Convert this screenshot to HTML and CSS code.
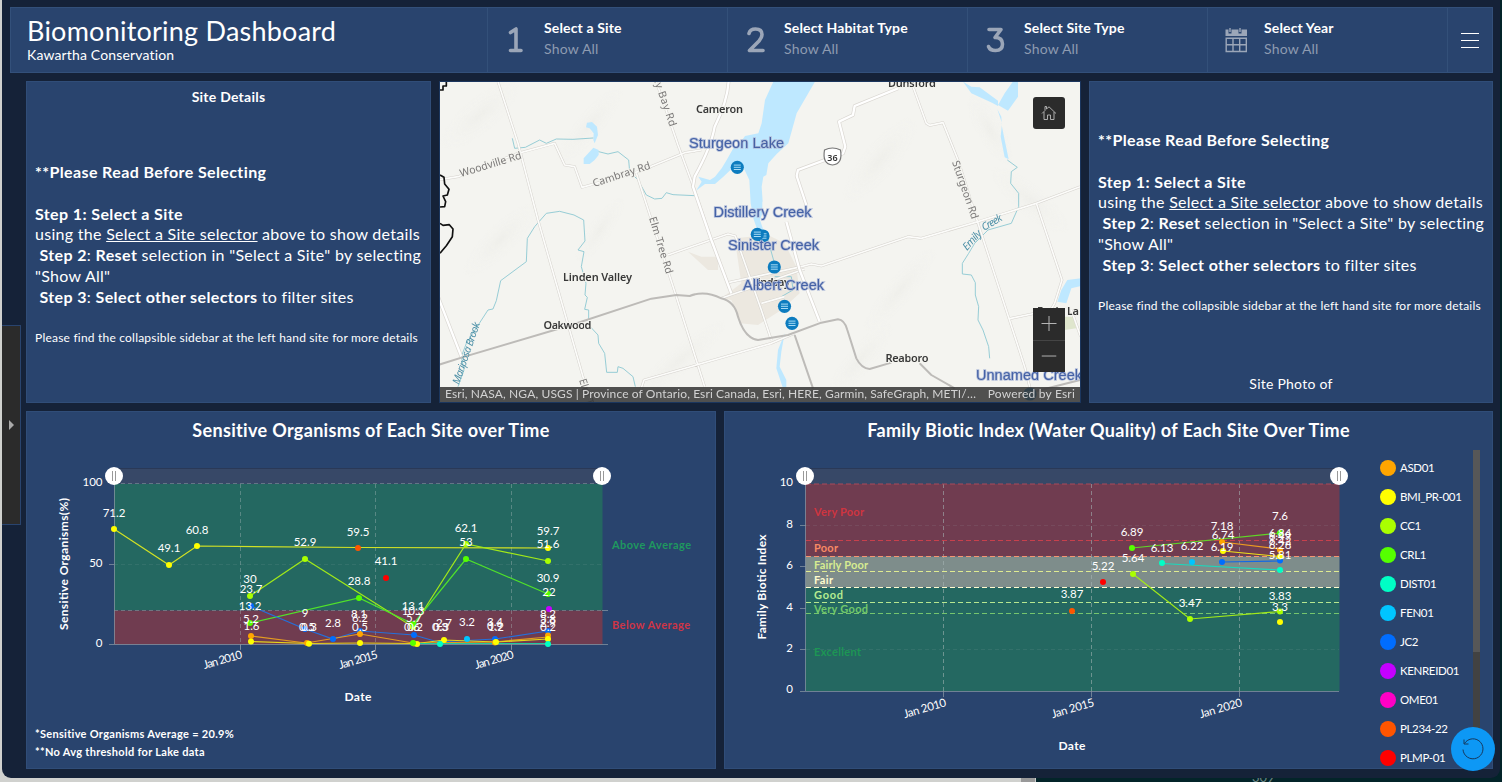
FILE: index.html
```html
<!DOCTYPE html>
<html lang="en">
<head>
<meta charset="utf-8">
<title>Biomonitoring Dashboard</title>
<link rel="stylesheet" href="styles.css">
</head>
<body>
<div class="window">
  <header class="header">
    <div class="brand">
      <h1>Biomonitoring Dashboard</h1>
      <p>Kawartha Conservation</p>
    </div>
    <div class="selector">
      <svg class="num" viewBox="0 0 28 30"><path d="M8.500 7.500 14 4V25M8.500 25.500H19"/></svg>
      <div><b>Select a Site</b><span>Show All</span></div>
    </div>
    <div class="selector">
      <svg class="num" viewBox="0 0 28 30"><path d="M7 8.500Q8 4 13.500 4Q20 4 20 9.500Q20 12.500 17 16L7.500 25.500H21"/></svg>
      <div><b>Select Habitat Type</b><span>Show All</span></div>
    </div>
    <div class="selector">
      <svg class="num" viewBox="0 0 28 30"><path d="M7 4.500H19L13 12.500Q20.500 12.500 20.500 19Q20.500 25.500 13.500 25.500Q8 25.500 6.500 21.500"/></svg>
      <div><b>Select Site Type</b><span>Show All</span></div>
    </div>
    <div class="selector">
      <svg class="cal" viewBox="0 0 28 30"><path class="fill" d="M3.500 4.500H6.500V8.500H9.500V4.500H16.500V8.500H19.500V4.500H22.500H25V11H3.500Z"/><path d="M8 3V7M18 3V7M4.200 13.200H24.300V26.500H4.200ZM11 13.200V26.500M17.700 13.200V26.500M4.200 19.800H24.300"/></svg>
      <div><b>Select Year</b><span>Show All</span></div>
    </div>
    <div class="menu"><i></i><i></i><i></i></div>
  </header>

  <div class="row top">
    <section class="panel details">
      <h2>Site Details</h2>
      <div class="steps">
        <p><b>**Please Read Before Selecting</b></p>
        <p>&nbsp;</p>
        <p><b>Step 1: Select a Site</b></p>
        <p>using the <u>Select a Site selector</u> above to show details</p>
        <p>&nbsp;<b>Step 2</b>: <b>Reset</b> selection in "Select a Site" by selecting<br>"Show All"</p>
        <p>&nbsp;<b>Step 3</b>: <b>Select other selectors</b> to filter sites</p>
        <p>&nbsp;</p>
        <p class="small">Please find the collapsible sidebar at the left hand site for more details</p>
      </div>
    </section>

    <section class="panel map">
      <svg class="canvas" viewBox="440 82 641 321">
        <defs>
          <radialGradient id="hill"><stop offset="0" stop-color="#ebebe6"/><stop offset="1" stop-color="#f4f4f0" stop-opacity="0"/></radialGradient>
          <g id="pin"><circle r="6.600" fill="#0d7cbf"/><path d="M-3.500-2.200H3.500M-3.500 0H3.500M-3.500 2.200H3.500" stroke="#a9dcf5" stroke-width="1"/></g>
        </defs>
        <rect x="440" y="82" width="641" height="321" fill="#f4f4f0"/>
        <g fill="url(#hill)" opacity=".55">
          <ellipse cx="480" cy="115" rx="50" ry="18" transform="rotate(-40 480 115)"/><ellipse cx="590" cy="125" rx="50" ry="14" transform="rotate(-50 590 125)"/>
          <ellipse cx="500" cy="240" rx="50" ry="16" transform="rotate(-45 500 240)"/><ellipse cx="600" cy="230" rx="40" ry="12" transform="rotate(-55 600 230)"/>
          <ellipse cx="880" cy="160" rx="55" ry="18" transform="rotate(-50 880 160)"/><ellipse cx="900" cy="290" rx="55" ry="14" transform="rotate(-50 900 290)"/>
          <ellipse cx="1030" cy="200" rx="50" ry="16" transform="rotate(40 1030 200)"/><ellipse cx="990" cy="130" rx="40" ry="14" transform="rotate(60 990 130)"/>
          <ellipse cx="680" cy="360" rx="60" ry="14" transform="rotate(-40 680 360)"/><ellipse cx="860" cy="360" rx="50" ry="14" transform="rotate(-50 860 360)"/>
        </g>
        <g transform="translate(438 80) scale(.33333)" fill="none" stroke-linejoin="round">
          <path fill="#ece8e0" d="M750 515 790 530 840 530V570H810ZM890 475 990 465 1040 490 1075 560 1085 640 1030 690 960 735 905 730 880 660 850 655 910 610Z"/>
          <g fill="#bee8ff">
            <path d="M1006 5 981 60 971 130 961 160 921 168 906 190 886 205 866 240 851 265 831 290 816 300 781 290 791 305 774 332 801 312 831 312 856 290 886 262 916 262 934 300 938 370 946 415 958 450H976L966 420 973 400V365H974L971 320 976 290 985 285 991 250 1016 222 1051 190 1076 100 1131 5Z"/>
            <path d="M447 128 462 126 477 140 480 165 470 190 466 180 467 160 455 145 444 142ZM466 203 482 210 482 225 470 240 455 252 437 252 437 235Z"/>
            <path d="M1575 5 1600 20 1625 22 1680 62 1680 78 1662 68 1600 40ZM1678 88 1690 110 1692 140 1700 180 1712 238 1700 232 1688 170 1692 130ZM1700 40 1728 0H1740V50L1710 92 1680 75Z"/>
            <path d="M1858 665 1870 630 1888 600 1930 595V618L1900 625 1885 670Z"/>
            <path d="M1040 760 1020 810 1015 865 1035 925 1045 922 1045 900 1025 860 1030 815Z"/>
          </g>
          <path fill="#dfe6cd" d="M1880 710H1905L1915 745 1880 750Z"/>
          <g stroke="#8fc9d3" stroke-width="2.800">
            <path d="M223 175 230 205 262 202 305 180 325 190 355 177 405 178 466 174M482 215 510 222 540 215 572 240 575 275 600 300 625 345 650 357 672 355 685 338 705 344 770 347M990 480 1008 545"/>
            <path d="M60 920 78 870 70 830 85 790 150 690 165 687 175 662 188 602 265 545 268 475 290 440 325 400 365 394 408 405 437 420 441 483 420 510 438 515 430 560 444 610 441 645 448 652 440 688 452 690 452 735 480 765 482 790 500 820 506 877 538 877 540 860 555 865 585 890 592 920"/>
            <path d="M1708 240 1738 262 1720 275 1718 310 1742 340 1742 380 1720 430 1650 450 1610 490 1592 520 1573 550 1573 582 1600 585 1612 608 1612 645 1622 680 1620 720 1635 750 1652 800 1655 835M1030 650 1065 630 1060 590 1010 590"/>
          </g>
          <g stroke="#d5d2cd" stroke-width="8">
            <path d="M180 5 240 190 300 420 435 890 455 960M0 300 60 290 240 220 350 190 380 255 410 260 432 322 600 275 740 218 790 210M655 5 720 195 768 325 820 480 880 640M595 280 715 650 800 920M690 525 870 462 892 468 970 690 1000 780M605 940 618 900 1000 790 1070 760M850 655 1100 567"/>
            <path d="M1425 20 1465 130 1475 136 1515 128 1560 240 1620 430 1760 860 1780 940M870 608 1090 560 1120 552 1150 558 1410 470 1450 475 1620 425 1795 370 1926 320M1795 370 1872 600 1850 670 1838 690 1715 716M1900 690 1928 770M970 670 1040 650"/>
          </g>
          <g stroke="#fcfcfa" stroke-width="5">
            <path d="M180 5 240 190 300 420 435 890 455 960M0 300 60 290 240 220 350 190 380 255 410 260 432 322 600 275 740 218 790 210M655 5 720 195 768 325 820 480 880 640M595 280 715 650 800 920M690 525 870 462 892 468 970 690 1000 780M605 940 618 900 1000 790 1070 760M850 655 1100 567"/>
            <path d="M1425 20 1465 130 1475 136 1515 128 1560 240 1620 430 1760 860 1780 940M870 608 1090 560 1120 552 1150 558 1410 470 1450 475 1620 425 1795 370 1926 320M1795 370 1872 600 1850 670 1838 690 1715 716M1900 690 1928 770M970 670 1040 650"/>
          </g>
          <g stroke="#dad7d2" stroke-width="11"><path d="M872 0Q870 60 830 140 820 200 770 290L765 320 820 480 880 640M1380 25 1250 78 1245 105 1203 125 1222 200 1215 220 1080 270 1076 288 1105 375M1045 425 1085 570 1145 725M0 650 70 830"/></g>
          <g stroke="#fff" stroke-width="7"><path d="M872 0Q870 60 830 140 820 200 770 290L765 320 820 480 880 640M1380 25 1250 78 1245 105 1203 125 1222 200 1215 220 1080 270 1076 288 1105 375M1045 425 1085 570 1145 725M0 650 70 830"/></g>
          <path stroke="#bdbbb8" stroke-width="6" d="M0 855 80 830 400 735 640 656 715 645 755 648 Q800 630 850 655 Q890 665 900 710 Q920 775 960 780 L1050 765 1150 728 1200 718Q1220 720 1228 750L1255 835Q1270 865 1295 867L1360 848M1070 765 1125 925M1445 850 1480 885 1550 925M1770 940 1926 900"/>
          <path stroke="#111" stroke-width="5" d="M6 30H15V18H25V5M6 285 18 292 20 312 33 328 28 345 15 348 23 365 20 380 6 381M6 430 15 436 34 434 45 447 43 470 25 497 6 520"/>
        </g>
        <g class="place">
          <text x="696" y="113" textLength="47">Cameron</text><text x="563" y="280.500" textLength="69">Linden Valley</text><text x="543.500" y="329" textLength="48">Oakwood</text><text x="885.500" y="361.500" textLength="43">Reaboro</text><text x="888" y="87" textLength="48">Dunsford</text><text x="752" y="286" textLength="38">Lindsay</text><text x="1037" y="315" textLength="42">Eagle La</text>
        </g>
        <g class="road">
          <text transform="translate(461 177) rotate(-17)" textLength="64">Woodville Rd</text><text transform="translate(594 187) rotate(-18)" textLength="60">Cambray Rd</text>
          <text transform="translate(649 218) rotate(73)" textLength="59">Elm Tree Rd</text><text transform="translate(653 78) rotate(71)" textLength="52">ey Bay Rd</text><text transform="translate(952 162) rotate(71)" textLength="61">Sturgeon Rd</text><text transform="translate(579 380) rotate(72)">Elm Tree Rd</text>
        </g>
        <g class="water"><text transform="translate(459 385) rotate(-71)" textLength="65">Mariposa Brook</text><text transform="translate(967 251) rotate(-48)" textLength="23">Emily</text><text transform="translate(984 231) rotate(-30)" textLength="22">Creek</text></g>
        <path d="M824.500 150Q832.500 146 840.500 150 843 164 832.500 165 822 164 824.500 150Z" fill="#fff" stroke="#777" stroke-width="1.200"/>
        <text x="832.500" y="161" text-anchor="middle" class="shield">36</text>
        <use href="#pin" x="763" y="236"/><use href="#pin" x="737.300" y="167.300"/><use href="#pin" x="757.300" y="234.300"/><use href="#pin" x="774.300" y="267"/><use href="#pin" x="784.500" y="306.300"/><use href="#pin" x="792" y="323.300"/><use href="#pin" x="1030" y="394"/>
        <g class="site">
          <text x="689" y="147.700" textLength="95">Sturgeon Lake</text><text x="713.500" y="216.700" textLength="98">Distillery Creek</text><text x="728" y="249.700" textLength="91">Sinister Creek</text><text x="743" y="289.700" textLength="81">Albert Creek</text><text x="976" y="379.700" textLength="106">Unnamed Creek</text>
        </g>
      </svg>
      <div class="home"><svg viewBox="0 0 16 16"><path d="M1 8.500 4 5.500V1.500H5.500V4M5.500 4 8 1.800 15 8.500M3 7V14.500H6.500V10H9.500V14.500H13V7"/></svg></div>
      <div class="zoomer"><svg viewBox="0 0 32 32"><path d="M8.500 15.500H23.500M16 8V23"/></svg><svg viewBox="0 0 32 32"><path d="M8.500 15.500H23.500"/></svg></div>
      <div class="credit"><span>Esri, NASA, NGA, USGS | Province of Ontario, Esri Canada, Esri, HERE, Garmin, SafeGraph, METI/…</span><span class="powered">Powered by Esri</span></div>
    </section>

    <section class="panel photo">
      <div class="steps">
        <p><b>**Please Read Before Selecting</b></p>
        <p>&nbsp;</p>
        <p><b>Step 1: Select a Site</b></p>
        <p>using the <u>Select a Site selector</u> above to show details</p>
        <p>&nbsp;<b>Step 2</b>: <b>Reset</b> selection in "Select a Site" by selecting<br>"Show All"</p>
        <p>&nbsp;<b>Step 3</b>: <b>Select other selectors</b> to filter sites</p>
        <p>&nbsp;</p>
        <p class="small">Please find the collapsible sidebar at the left hand site for more details</p>
      </div>
      <p class="caption">Site Photo of</p>
    </section>
  </div>

  <div class="row bottom">
    <section class="panel organisms">
      <h3>Sensitive Organisms of Each Site over Time</h3>
      <svg class="chart" viewBox="27 450 688 274">
        <rect x="114" y="469" width="488" height="15" fill="#374867"/><path d="M114 468.500H602" stroke="#2a3957"/>
        <rect x="114" y="484" width="488.500" height="126.500" fill="#246861"/><rect x="114" y="610.500" width="488.500" height="34" fill="#703c50"/>
        <g class="grid"><path d="M240.500 484V650M375.500 484V650M511.500 484V650M114 483.500H602M114 610.500H602"/><path opacity=".3" d="M114 564.500H602"/></g>
        <path class="axis" d="M114.500 484V644M109 564.500H114M109 644.500H608M602 610.500H608M240.500 644V650M375.500 644V650M511.500 644V650"/>
        <g class="line">
          <path stroke="#d2e224" d="M114 529 169 565 197 546 358 547.500 548 548"/>
          <path stroke="#a2ea18" d="M250 596 305 559 413 627 466 544 548 561"/>
          <path stroke="#50e22a" d="M250 623 359 598 413.300 624 466 559 548 594"/>
          <path stroke="#2470dc" d="M251 606 305 629 333 639 360 631 414 635 438 642 495 639 548 631"/>
          <path stroke="#e49b20" d="M251 636 306 643 360 634 413 643 494 642 548 637"/>
          <path stroke="#e5d51b" d="M251 641.500 309 643.500 360 643 417 643.500 444 640 496 642 548 639"/>
          <path stroke="#20caa0" d="M413 643.500 440 643.500 548 643.500"/>
        </g>
        <g class="dots">
          <g fill="#006dff"><circle cx="251" cy="606" r="3"/><circle cx="305" cy="629" r="3"/><circle cx="333" cy="639" r="3"/><circle cx="360" cy="631" r="3"/><circle cx="414" cy="635" r="3"/><circle cx="495" cy="639" r="3"/><circle cx="548" cy="631" r="3"/></g>
          <g fill="#ffa500"><circle cx="251" cy="636" r="3"/><circle cx="307" cy="643" r="3"/><circle cx="360" cy="634" r="3"/><circle cx="414" cy="643.500" r="3"/><circle cx="495" cy="642.500" r="3"/><circle cx="548" cy="635.500" r="3"/></g>
          <g fill="#ff0"><circle cx="114" cy="529" r="3"/><circle cx="169" cy="565" r="3"/><circle cx="197" cy="546" r="3"/><circle cx="548" cy="548" r="3"/><circle cx="251" cy="641.500" r="3"/><circle cx="309" cy="643.800" r="3"/><circle cx="360" cy="643" r="3"/><circle cx="417" cy="644" r="3"/><circle cx="444" cy="640" r="3"/><circle cx="496" cy="642" r="3"/><circle cx="548" cy="639" r="3"/></g>
          <g fill="#af0"><circle cx="250" cy="596" r="3"/><circle cx="305" cy="559" r="3"/><circle cx="413" cy="627" r="3"/><circle cx="466" cy="544" r="3"/><circle cx="548" cy="561" r="3"/></g>
          <g fill="#5f0"><circle cx="250" cy="623" r="3"/><circle cx="359" cy="598" r="3"/><circle cx="413.300" cy="624" r="3"/><circle cx="466" cy="559" r="3"/><circle cx="548" cy="594" r="3"/><circle cx="413" cy="643" r="3"/></g>
          <circle cx="440" cy="644" r="3" fill="#00ffc5"/><circle cx="548" cy="644" r="3" fill="#00ffc5"/><circle cx="467" cy="639" r="3" fill="#00c5ff"/><circle cx="549" cy="609" r="3" fill="#c500ff"/><circle cx="386" cy="578" r="3" fill="#f00"/><circle cx="358" cy="548" r="3" fill="#f50"/>
        </g>
        <g class="label">
          <text x="114" y="517">71.2</text><text x="169" y="552">49.1</text><text x="197" y="534">60.8</text><text x="305" y="546">52.9</text><text x="358" y="536">59.5</text><text x="466" y="532">62.1</text><text x="466" y="546">53</text><text x="548" y="535">59.7</text><text x="548" y="548">51.6</text>
          <text x="250" y="583">30</text><text x="251" y="593">23.7</text><text x="250" y="610">13.2</text><text x="251" y="623">5.2</text><text x="251.500" y="629.500">1.6</text><text x="305" y="617">9</text><text x="307" y="631">0.5</text><text x="309" y="631">0.3</text><text x="333" y="627">2.8</text>
          <text x="359" y="585">28.8</text><text x="359" y="618">8.1</text><text x="360" y="622">6.2</text><text x="360" y="631">0.5</text><text x="386" y="565">41.1</text><text x="413" y="610">13.1</text><text x="413" y="615">10.3</text><text x="414" y="622">5.7</text><text x="412" y="631">0.6</text><text x="415" y="631">0.2</text>
          <text x="440" y="631">0.3</text><text x="441" y="631">0.3</text><text x="444" y="627">2.7</text><text x="467" y="626">3.2</text><text x="495" y="626">3.4</text><text x="495" y="630">0.9</text><text x="496" y="630.500">1.2</text><text x="548" y="582">30.9</text><text x="549" y="596">22</text><text x="548" y="618">8.2</text><text x="548" y="623">5.8</text><text x="548" y="627">2.9</text><text x="548" y="631">0.2</text>
        </g>
        <g class="label end"><text x="102.500" y="485.500">100</text><text x="102.500" y="566.500">50</text><text x="102.500" y="646.500">0</text>
          <text transform="translate(243 658) rotate(-16)" textLength="40">Jan 2010</text><text transform="translate(378.500 658) rotate(-16)" textLength="40">Jan 2015</text><text transform="translate(514.500 658) rotate(-16)" textLength="40">Jan 2020</text></g>
        <text class="title" x="358" y="701" textLength="27">Date</text><text class="title" transform="translate(68 564) rotate(-90)" textLength="132">Sensitive Organisms(%)</text>
        <text class="note" x="612" y="549" fill="#1f985f" textLength="79">Above Average</text><text class="note" x="612" y="629" fill="#cf3546" textLength="78">Below Average</text>
        <g class="handle"><circle cx="114" cy="476" r="9"/><circle cx="602" cy="476" r="9"/><path d="M112.500 471V481M115.500 471V481M600.500 471V481M603.500 471V481"/></g>
      </svg>
      <div class="foot"><p>*Sensitive Organisms Average = 20.9%</p><p>**No Avg threshold for Lake data</p></div>
    </section>

    <section class="panel biotic">
      <h3>Family Biotic Index (Water Quality) of Each Site Over Time</h3>
      <div class="split">
        <svg class="chart" viewBox="725 450 655 318">
          <rect x="806" y="469" width="534" height="15" fill="#374867"/><path d="M806 468.500H1340" stroke="#2a3957"/>
          <rect x="805.500" y="484" width="534" height="72.500" fill="#703c50"/><rect x="805.500" y="556.500" width="534" height="31" fill="#7e8d8b"/><rect x="805.500" y="587.500" width="534" height="103.500" fill="#246861"/>
          <g class="grid strong"><path d="M943.500 484V691M1091.500 484V691M1239.500 484V691"/><path opacity=".22" d="M806 525.500H1339M806 649.500H1339"/></g>
          <g class="band"><path stroke="#a94a5b" d="M806 484H1339"/><path stroke="#c8404c" d="M806 540.500H1339"/><path stroke="#f49572" d="M806 556.500H1339"/><path stroke="#dfeb91" d="M806 571.500H1339"/><path stroke="#fffccf" d="M806 587.500H1339"/><path stroke="#b7e790" d="M806 602.500H1339"/><path stroke="#75c56e" d="M806 613.500H1339"/></g>
          <path class="axis" d="M805.500 484V691M800 525.500H806M800 566.500H806M800 608.500H806M800 649.500H806M800 691.500H1339M943.500 691V697M1091.500 691V697M1239.500 691V697"/>
          <g class="zone"><text x="814" y="516" fill="#cf3540" textLength="50">Very Poor</text><text x="814" y="552" fill="#f88a65" textLength="24">Poor</text><text x="814" y="568.500" fill="#d7ec91" textLength="54">Fairly Poor</text><text x="814" y="583.500" fill="#fffccf" textLength="19">Fair</text><text x="814" y="599" fill="#b6eb90" textLength="29">Good</text><text x="814" y="612.500" fill="#72c86a" textLength="54">Very Good</text><text x="814" y="656" fill="#1d9654" textLength="47">Excellent</text></g>
          <g class="line"><path stroke="#a2ea18" d="M1133 574 1190 619 1280 611.500"/><path stroke="#60d627" d="M1132 548 1280 533"/><path stroke="#1cd8bc" d="M1162 563.500 1280 570"/><path stroke="#ed9b20" d="M1222 542 1280 549"/><path stroke="#f0e419" d="M1223 551 1280 556.500"/><path stroke="#1268e5" d="M1222 562 1280 561"/></g>
          <g class="dots"><circle cx="1072" cy="611" r="3" fill="#f50"/><circle cx="1103" cy="582" r="3" fill="#f00"/><circle cx="1192" cy="562" r="3" fill="#00c5ff"/>
            <g fill="#ffa500"><circle cx="1222" cy="542" r="3"/><circle cx="1280" cy="550" r="3"/></g><g fill="#006dff"><circle cx="1222" cy="562" r="3"/><circle cx="1280" cy="560.500" r="3"/></g><g fill="#00ffc5"><circle cx="1162" cy="563" r="3"/><circle cx="1280" cy="570" r="3"/></g><g fill="#ff0"><circle cx="1223" cy="551" r="3"/><circle cx="1280" cy="556.500" r="3"/><circle cx="1280" cy="622" r="3"/></g><g fill="#af0"><circle cx="1133" cy="574" r="3"/><circle cx="1190" cy="619" r="3"/><circle cx="1280" cy="611.500" r="3"/></g><g fill="#5f0"><circle cx="1132" cy="548" r="3"/><circle cx="1280" cy="533" r="3"/></g></g>
          <g class="label"><text x="1072" y="598">3.87</text><text x="1103" y="570">5.22</text><text x="1132" y="535.500">6.89</text><text x="1133" y="561.500">5.64</text><text x="1162" y="552">6.13</text><text x="1192" y="549.500">6.22</text><text x="1222" y="529.500">7.18</text><text x="1223" y="538.500">6.74</text><text x="1222" y="551">6.19</text><text x="1280" y="520">7.6</text><text x="1280" y="536.500">6.84</text><text x="1280" y="540">6.49</text><text x="1280" y="545">6.42</text><text x="1280" y="548.500">6.28</text><text x="1280" y="558.500">5.81</text><text x="1190" y="606.500">3.47</text><text x="1280" y="599.500">3.83</text><text x="1280" y="610.500">3.3</text></g>
          <g class="label end"><text x="793" y="485.500">10</text><text x="793" y="527.500">8</text><text x="793" y="569">6</text><text x="793" y="611">4</text><text x="793" y="652">2</text><text x="793" y="693">0</text><text transform="translate(947 706) rotate(-16)" textLength="44">Jan 2010</text><text transform="translate(1095 706) rotate(-16)" textLength="44">Jan 2015</text><text transform="translate(1243 706) rotate(-16)" textLength="44">Jan 2020</text></g>
          <text class="title" x="1072" y="750" textLength="27">Date</text><text class="title" transform="translate(766 587) rotate(-90)" textLength="105">Family Biotic Index</text>
          <g class="handle"><circle cx="805" cy="476" r="9"/><circle cx="1339" cy="476" r="9"/><path d="M803.500 471V481M806.500 471V481M1337.500 471V481M1340.500 471V481"/></g>
        </svg>
        <ul class="legend">
          <li class="c1">ASD01</li><li class="c2">BMI_PR-001</li><li class="c3">CC1</li><li class="c4">CRL1</li><li class="c5">DIST01</li><li class="c6">FEN01</li><li class="c7">JC2</li><li class="c8">KENREID01</li><li class="c9">OME01</li><li class="c10">PL234-22</li><li class="c11">PLMP-01</li>
        </ul>
        <div class="scroll"><i></i></div>
      </div>
    </section>
  </div>

  <div class="drawer"><i></i></div>
  <div class="reset"><svg viewBox="0 0 24 24"><path d="M3 2.500V7H7.500M3.500 6.500A10 10 0 1 1 2 12.500"/></svg></div>
</div>
<div class="behind"><span>309</span></div>
</body>
</html>
```
FILE: styles.css
```css
* { box-sizing: border-box; margin: 0; padding: 0; }
body {
  width: 1502px; height: 782px; overflow: hidden; position: relative;
  font-family: Lato, "Open Sans", sans-serif; color: #fff;
  background: linear-gradient(90deg, #d0d1ce 0 1021px, #999 1021px 1035px, #ccc 1035px 1036px, #032429 1036px);
}
.window {
  position: relative; z-index: 1; width: 1498px; height: 778px; margin-left: 2px;
  padding: 7px 7px 0 8px; background: #152238; border-radius: 0 0 9px 9px;
}
.behind { position: absolute; right: 0; bottom: 0; left: 1036px; height: 5px; overflow: hidden; }
.behind span { display: block; margin: -6px 0 0 216px; font-size: 13px; line-height: 12px; color: #6b8584; }
.header { display: flex; height: 66px; background: #29446e; border: 1px solid #33507a; }
.brand { width: 476px; padding: 6px 16px; }
h1 { font-size: 27px; line-height: 34px; font-weight: 400; letter-spacing: .23px; white-space: nowrap; }
.brand p { font-size: 14px; line-height: 16px; letter-spacing: .15px; margin-top: -1px; }
.selector { width: 240px; display: flex; align-items: center; padding-left: 14px; border-left: 1px solid #335079; }
.selector > svg { width: 28px; height: 30px; margin-right: 14px; }
.num { fill: none; stroke: #9ba6b8; stroke-width: 3.600; stroke-linecap: round; stroke-linejoin: round; }
.cal { fill: none; stroke: #9ba6b8; stroke-width: 1.400; }
.cal .fill { fill: #9ba6b8; stroke: none; }
.selector div { padding-bottom: 4px; }
.selector b { display: block; font-size: 14px; line-height: 20px; font-weight: 700; letter-spacing: .14px; }
.selector span { display: block; font-size: 14px; line-height: 21px; color: #8e9bb1; letter-spacing: .2px; }
.menu { flex: 1; border-left: 1px solid #335079; display: flex; flex-direction: column; align-items: center; justify-content: center; gap: 6px; }
.menu i { width: 18px; height: 1px; background: #fff; }
.row { display: flex; gap: 8px; margin-left: 16px; }
.top { margin-top: 8px; height: 322px; }
.bottom { margin-top: 8px; height: 358px; }
.panel { background: #29446e; border: 1px solid #304d78; position: relative; }
.details { width: 405px; }
.map { width: 642px; overflow: hidden; background: #f3f3ee; border-color: #1b365e; }
.photo { width: 404px; }
h2 { font-size: 14px; line-height: 18px; text-align: center; margin-top: 6px; letter-spacing: .25px; }
.steps { padding-left: 8px; white-space: nowrap; }
.details .steps { margin-top: 56px; }
.photo .steps { padding-top: 48px; }
.steps p { font-size: 16px; line-height: 20.800px; letter-spacing: .29px; }
.steps b { letter-spacing: .39px; }
.steps .small { font-size: 12px; letter-spacing: .21px; }
.caption { font-size: 14px; line-height: 20px; text-align: center; margin-top: 57px; letter-spacing: .25px; }
.canvas { display: block; width: 641px; height: 321px; }
.place text { font: 600 11px "Noto Sans", sans-serif; fill: #383838; paint-order: stroke; stroke: #f3f3ee; stroke-width: 2px; }
.road text { font: 10.500px "Noto Sans", sans-serif; fill: #7a7878; paint-order: stroke; stroke: #f3f3ee; stroke-width: 2px; }
.water text { font: italic 10.500px "Noto Sans", sans-serif; fill: #4f91a8; }
.site text { font: 14.500px "Liberation Sans", sans-serif; fill: #4562a6; paint-order: stroke; stroke: #b4bfda; stroke-width: 1.600px; }
.shield { font: 600 9px "Noto Sans", sans-serif; fill: #333; }
.home, .zoomer { position: absolute; right: 15px; width: 32px; background: #2b2b2b; }
.home { top: 15px; height: 32px; border-radius: 3px; padding: 8px; }
.home svg { display: block; width: 16px; height: 16px; fill: none; stroke: #bbb; stroke-width: .9; }
.zoomer { top: 226px; height: 64px; }
.zoomer svg { display: block; width: 32px; height: 32px; fill: none; stroke: #b5b5b5; }
.zoomer svg + svg { border-top: 1px solid #454545; }
.credit { position: absolute; left: 0; right: 0; bottom: 0; height: 15px; display: flex; justify-content: space-between; padding: 0 5px; font-size: 12px; line-height: 14px; letter-spacing: .12px; color: #d2d2d2; background: rgba(55, 55, 55, .87); white-space: nowrap; }
.powered { letter-spacing: .2px; }
h3 { height: 38px; text-align: center; font-size: 18px; line-height: 37px; font-weight: 700; letter-spacing: .33px; }
.organisms { width: 690px; }
.biotic { width: 769px; }
.organisms .chart { display: block; width: 688px; height: 274px; }
.foot { padding: 1px 8px; font-size: 11px; line-height: 18px; font-weight: 700; letter-spacing: .3px; }
.split { display: flex; height: 318px; overflow: hidden; }
.split .chart { width: 655px; height: 318px; flex: none; }
.grid { fill: none; stroke: #a8b8b8; stroke-opacity: .4; stroke-dasharray: 4 3; }
.grid.strong { stroke-opacity: .55; }
.axis { fill: none; stroke: #8796a3; stroke-opacity: .75; }
.line { fill: none; stroke-width: 1.200; }
.label { font-size: 11.500px; fill: #fff; text-anchor: middle; }
.label.end { text-anchor: end; }
.title { font-size: 12px; font-weight: 700; fill: #fff; text-anchor: middle; }
.note, .zone { font-size: 11px; font-weight: 700; }
.band { fill: none; stroke-width: 1.200; stroke-dasharray: 5 3; }
.handle circle { fill: #fff; }
.handle path { stroke: #999; }
.legend { list-style: none; width: 93px; padding-top: 3px; font-size: 11.500px; letter-spacing: -.35px; flex: none; }
.legend li { height: 29px; display: flex; align-items: center; gap: 4px; white-space: nowrap; }
.legend li::before { content: ""; flex: none; width: 16px; height: 16px; border-radius: 50%; background: currentColor; }
.legend li { -webkit-text-fill-color: #fff; }
.c1 { color: #ffa500; } .c2 { color: #ff0; } .c3 { color: #af0; } .c4 { color: #5f0; }
.c5 { color: #00ffc5; } .c6 { color: #00c5ff; } .c7 { color: #006dff; } .c8 { color: #c500ff; }
.c9 { color: #ff00c5; } .c10 { color: #f50; } .c11 { color: #f00; }
.scroll { width: 7px; background: #424242; }
.scroll i { display: block; height: 202px; background: #575757; }
.drawer { position: absolute; left: 0; top: 325px; width: 19px; height: 200px; background: #2b2b2b; border: solid #29446e; border-width: 1px 1px 1px 0; display: flex; align-items: center; padding-left: 7px; }
.drawer i { border: solid transparent; border-width: 5px 0 5px 5px; border-left-color: #aaa; }
.reset { position: absolute; left: 1449px; top: 727px; width: 44px; height: 44px; border-radius: 50%; background: #0d98f5; padding: 10px; }
.reset svg { display: block; width: 24px; height: 24px; fill: none; stroke: #17385d; stroke-width: 1; }
```
